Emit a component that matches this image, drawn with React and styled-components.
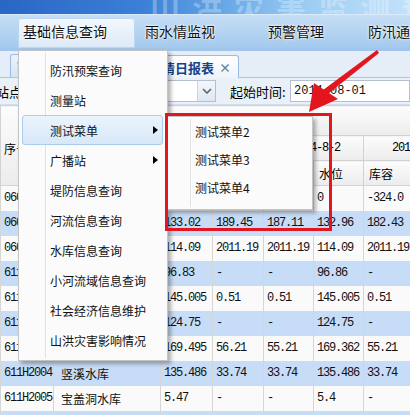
import styled, { createGlobalStyle, css } from "styled-components";

const Global = createGlobalStyle`
  body { margin: 0; background: #fff; }
`;

const Page = styled.div`
  position: relative;
  width: 410px;
  height: 415px;
  overflow: hidden;
  font-family: "Noto Sans CJK SC", "DejaVu Sans", sans-serif;
  font-size: 12px;
  color: #000;
  background: #fff;
`;

const Banner = styled.div`
  height: 14px;
  overflow: hidden;
  white-space: nowrap;
  background: linear-gradient(90deg, #2a66c4 0%, #3b80d7 35%, #68a8e6 55%, #9ccdf3 75%, #c3e2fa 100%);
`;

const BannerTitle = styled.div`
  margin: -16px 0 0 150px;
  font-size: 30px;
  font-weight: bold;
  letter-spacing: 12px;
  color: rgba(255, 255, 255, 0.3);
`;

const Nav = styled.div`
  height: 34px;
  box-sizing: border-box;
  display: flex;
  align-items: flex-end;
  gap: 5px;
  padding-left: 18px;
  border-top: 1px solid #d9eafa;
  background: linear-gradient(#c6def6, #a4c9ee);
  overflow: hidden;
`;

const NavItem = styled.div`
  flex: none;
  width: ${(p) => p.$w}px;
  height: 30px;
  box-sizing: border-box;
  padding: 0 0 5px 5px;
  display: flex;
  align-items: center;
  font-size: 14px;
  color: #111;
  white-space: nowrap;
  text-shadow: 0 0 3px #fff, 0 0 2px #fff;
  ${(p) =>
    p.$active &&
    css`
      background: linear-gradient(#f3f8fd, #dbe9f7);
      border-radius: 4px 4px 0 0;
      box-shadow: inset 0 0 0 1px #bcd6f1;
    `}
`;

const NavLine = styled.div`
  height: 3px;
  background: #a2c5eb;
`;

const TabStrip = styled.div`
  height: 27px;
  box-sizing: border-box;
  display: flex;
  align-items: flex-end;
  gap: 2px;
  padding-left: 10px;
  background: #e4edf8;
  border-bottom: 1px solid #a9c6ea;
`;

const Tab = styled.div`
  flex: none;
  width: ${(p) => (p.$w ? `${p.$w}px` : "auto")};
  height: 23px;
  box-sizing: border-box;
  padding: 0 7px 0 6px;
  margin-bottom: ${(p) => (p.$active ? "-1px" : "0")};
  display: flex;
  align-items: center;
  gap: 5px;
  border: 1px solid #99bbe8;
  border-bottom: none;
  border-radius: 3px 3px 0 0;
  background: ${(p) => (p.$active ? "linear-gradient(#ffffff, #eef4fb)" : "linear-gradient(#eef3fa, #d7e4f3)")};
  color: #15428b;
  font-size: 13px;
  font-weight: bold;
  white-space: nowrap;
  overflow: hidden;
`;

const Close = styled.span`
  color: #6b7f99;
  font-size: 12px;
  font-weight: bold;
`;

const Toolbar = styled.div`
  height: 27px;
  box-sizing: border-box;
  display: flex;
  align-items: center;
  background: #eaf0f8;
  border-bottom: 1px solid #d3dfee;
`;

const Label = styled.div`
  flex: none;
  width: ${(p) => p.$w}px;
  margin-left: ${(p) => p.$shift || 0}px;
  font-size: 13px;
  white-space: nowrap;
`;

const Select = styled.div`
  flex: none;
  width: 186px;
  height: 22px;
  box-sizing: border-box;
  margin-right: 14px;
  display: flex;
  justify-content: flex-end;
  background: #fff;
  border: 1px solid #b5bfcf;
`;

const SelectButton = styled.div`
  width: 17px;
  display: flex;
  align-items: center;
  justify-content: center;
  background: linear-gradient(#f4f7fb, #dfe7f1);
  border-left: 1px solid #c9d3e1;
`;

const DateInput = styled.div`
  flex: 1;
  height: 22px;
  box-sizing: border-box;
  padding-left: 3px;
  display: flex;
  align-items: center;
  background: #fff;
  border: 1px solid #b5bfcf;
  font-family: "Liberation Mono", monospace;
  font-size: 12px;
  color: #111;
`;

const Grid = styled.table`
  border-collapse: collapse;
  table-layout: fixed;
  width: 463px;
`;

const Row = styled.tr`
  height: ${(p) => p.$h}px;
  background: ${(p) => (p.$alt ? "#c7dcf6" : "#fafafa")};
`;

const Th = styled.th`
  padding: ${(p) => (p.$top ? "6px 0 0 3px" : "0 0 0 5px")};
  border: 1px solid #d2d2d2;
  background: linear-gradient(#fcfcfc, #ececec);
  font-weight: normal;
  font-size: 12px;
  text-align: ${(p) => (p.$center ? "center" : "left")};
  white-space: nowrap;
  overflow: hidden;
  ${(p) =>
    p.$mono &&
    css`
      font-family: "Liberation Mono", monospace;
      letter-spacing: -1.2px;
    `}
`;

const Td = styled.td`
  padding: 0 0 0 ${(p) => (p.$name ? 7 : 3)}px;
  border-left: 1px solid #d6d6d6;
  border-right: 1px solid #d6d6d6;
  white-space: nowrap;
  overflow: hidden;
  color: #111;
  ${(p) =>
    p.$name
      ? css`
          font-family: "Noto Sans CJK SC", sans-serif;
          font-size: 12px;
        `
      : css`
          font-family: "Liberation Mono", "Noto Sans CJK SC", monospace;
          font-size: 12px;
          letter-spacing: -1.2px;
        `}
`;

const Menu = styled.div`
  position: absolute;
  left: ${(p) => p.$x}px;
  top: ${(p) => p.$y}px;
  width: ${(p) => p.$w}px;
  box-sizing: border-box;
  padding: ${(p) => p.$pad};
  background: #fbfbfb;
  border: 1px solid #c4c4c4;
  box-shadow: 3px 3px 4px rgba(0, 0, 0, 0.3);

  &::before {
    content: "";
    position: absolute;
    left: ${(p) => p.$sep}px;
    top: 2px;
    bottom: 2px;
    width: 1px;
    background: #e0e0e0;
    border-right: 1px solid #fff;
  }
`;

const MenuItem = styled.div`
  position: relative;
  height: ${(p) => p.$h}px;
  box-sizing: border-box;
  padding-left: ${(p) => p.$indent}px;
  display: flex;
  align-items: center;
  border: 1px solid transparent;
  border-radius: 3px;
  font-size: 12px;
  color: #111;
  white-space: nowrap;
  ${(p) =>
    p.$active &&
    css`
      background: linear-gradient(#ebf4fd, #d8e8f8);
      border-color: #a9ccf0;
    `}
`;

const Caret = styled.span`
  margin: 0 4px 0 auto;
  width: 0;
  height: 0;
  border-left: 5px solid #000;
  border-top: 4px solid transparent;
  border-bottom: 4px solid transparent;
`;

const RedBox = styled.div`
  position: absolute;
  left: 165px;
  top: 113px;
  width: 167px;
  height: 118px;
  box-sizing: border-box;
  border: 3px solid #e3161d;
`;

const Overlay = styled.svg`
  position: absolute;
  left: 0;
  top: 0;
  pointer-events: none;
`;

const rows = [
  ["06010001", "龙潭水库", "0", "-324.0", "0", "0", "-324.0", "0"],
  ["06010002", "长坑水库", "133.02", "189.45", "187.11", "132.96", "182.43", "187.11"],
  ["06010003", "石门水库", "114.09", "2011.19", "2011.19", "114.09", "2011.19", "2011.19"],
  ["611H2001", "高坪水库", "96.83", "-", "-", "96.86", "-", "-"],
  ["611H2002", "溪口水库", "145.005", "0.51", "0.51", "145.005", "0.51", "0.51"],
  ["611H2003", "上坪水库", "124.75", "-", "-", "124.75", "-", "-"],
  ["611H2008", "黄竹水库", "169.495", "56.21", "55.21", "169.362", "55.21", "55.21"],
  ["611H2004", "竖溪水库", "135.486", "33.74", "33.74", "135.486", "33.74", "33.74"],
  ["611H2005", "宝盖洞水库", "5.47", "-", "-", "5.4", "-", "-"],
  ["611H2006", "下洋水库", "88.12", "1.05", "1.05", "88.10", "1.05", "1.05"],
];

const menuItems = [
  "防汛预案查询",
  "测量站",
  "测试菜单",
  "广播站",
  "堤防信息查询",
  "河流信息查询",
  "水库信息查询",
  "小河流域信息查询",
  "社会经济信息维护",
  "山洪灾害影响情况",
];

export default function App() {
  return (
    <Page>
      <Global />
      <Banner>
        <BannerTitle>山洪灾害监测预警</BannerTitle>
      </Banner>
      <Nav>
        <NavItem $w={117} $active>基础信息查询</NavItem>
        <NavItem $w={118}>雨水情监视</NavItem>
        <NavItem $w={95}>预警管理</NavItem>
        <NavItem $w={80}>防汛通讯</NavItem>
      </Nav>
      <NavLine />
      <TabStrip>
        <Tab $w={117}>雨量统计报表</Tab>
        <Tab $active>
          雨水情日报表<Close>×</Close>
        </Tab>
      </TabStrip>
      <Toolbar>
        <Label $w={34} $shift={-4}>站点:</Label>
        <Select>
          <SelectButton>
            <svg width="10" height="6" viewBox="0 0 10 6">
              <polyline points="1,1 5,5 9,1" fill="none" stroke="#5a6470" strokeWidth="1.6" />
            </svg>
          </SelectButton>
        </Select>
        <Label $w={60}>起始时间:</Label>
        <DateInput>2014-08-01</DateInput>
      </Toolbar>
      <Grid>
        <colgroup>
          <col style={{ width: 53 }} />
          <col style={{ width: 107 }} />
          <col style={{ width: 52 }} />
          <col style={{ width: 51 }} />
          <col style={{ width: 50 }} />
          <col style={{ width: 50 }} />
          <col style={{ width: 50 }} />
          <col style={{ width: 50 }} />
        </colgroup>
        <thead>
          <Row $h={30}>
            <Th rowSpan={3} $top>序号</Th>
            <Th rowSpan={3} $center>测站名称</Th>
            <Th colSpan={6}>日期</Th>
          </Row>
          <Row $h={25}>
            <Th colSpan={2} $center $mono>2014-8-1</Th>
            <Th colSpan={2} $center $mono>2014-8-2</Th>
            <Th colSpan={2} $center $mono>2014-8-3</Th>
          </Row>
          <Row $h={25}>
            <Th>水位</Th>
            <Th>库容</Th>
            <Th>库容</Th>
            <Th>水位</Th>
            <Th>库容</Th>
            <Th>水位</Th>
          </Row>
        </thead>
        <tbody>
          {rows.map((r, i) => (
            <Row key={r[0]} $h={25} $alt={i % 2 === 1}>
              {r.map((v, j) => (
                <Td key={j} $name={j === 1}>
                  {v}
                </Td>
              ))}
            </Row>
          ))}
        </tbody>
      </Grid>

      <Menu $x={18} $y={50} $w={150} $pad="4px 4px 5px 3px" $sep={26}>
        {menuItems.map((m) => (
          <MenuItem key={m} $h={30} $indent={27} $active={m === "测试菜单"}>
            {m}
            {(m === "测试菜单" || m === "广播站") && <Caret />}
          </MenuItem>
        ))}
      </Menu>

      <Menu $x={167} $y={116} $w={146} $pad="0 0 8px 0" $sep={22}>
        {["测试菜单2", "测试菜单3", "测试菜单4"].map((m) => (
          <MenuItem key={m} $h={28} $indent={26}>
            {m}
          </MenuItem>
        ))}
      </Menu>

      <RedBox />

      <Overlay width="410" height="415" viewBox="0 0 410 415">
        <polygon points="377,50 379,53 328,94 323,90" fill="#e3161d" />
        <polygon points="309,112 314,83 338,99" fill="#e3161d" />
      </Overlay>
    </Page>
  );
}
